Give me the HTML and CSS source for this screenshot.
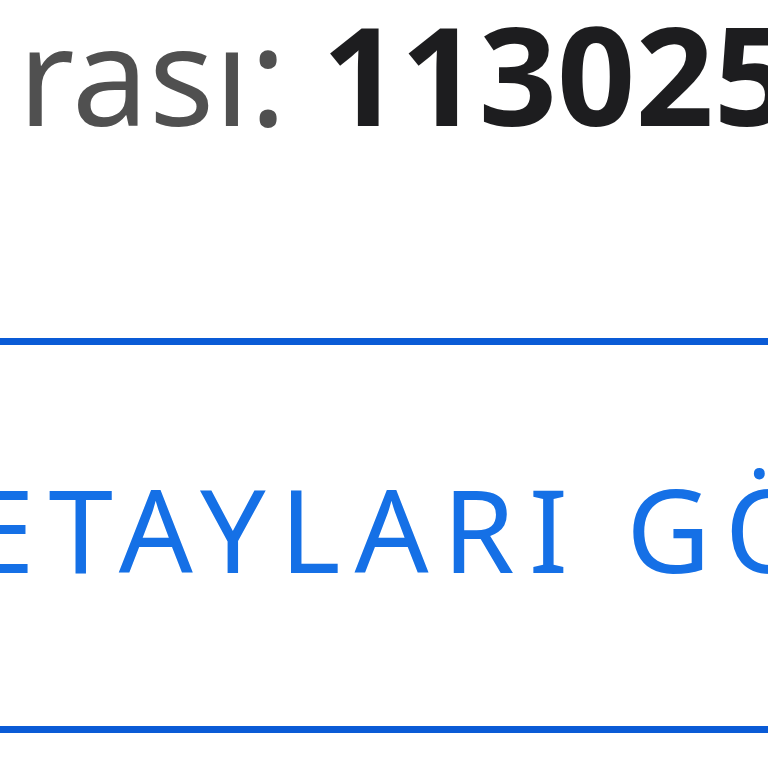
FILE: index.html
```html
<!DOCTYPE html>
<html lang="tr">
<head>
<meta charset="utf-8">
<link rel="stylesheet" href="styles.css">
</head>
<body>
<main class="page">
  <p class="order"><span class="label">rası:</span> <strong class="num">113025</strong></p>
  <a class="btn" href="#">ETAYLARI GÖ</a>
</main>
</body>
</html>
```
FILE: styles.css
```css
html, body {
  margin: 0;
  padding: 0;
  background: #fff;
  overflow: hidden;
}
.page {
  width: 768px;
  height: 768px;
  overflow: hidden;
  font-family: "Noto Sans", "DejaVu Sans", sans-serif;
}
.order {
  margin: 0;
  padding: 3px 0 0 18px;
  font-size: 137px;
  line-height: 140px;
  white-space: nowrap;
  color: #505050;
}
.num {
  color: #1d1d1f;
  font-weight: 700;
}
.btn {
  display: block;
  margin: 195px -200px 0 -200px;
  padding: 0 0 0 170px;
  border-top: 7px solid #0a5bd6;
  border-bottom: 7px solid #0a5bd6;
  height: 381px;
  line-height: 366px;
  font-size: 116px;
  letter-spacing: 14px;
  color: #1570e6;
  text-decoration: none;
  white-space: nowrap;
}
```
